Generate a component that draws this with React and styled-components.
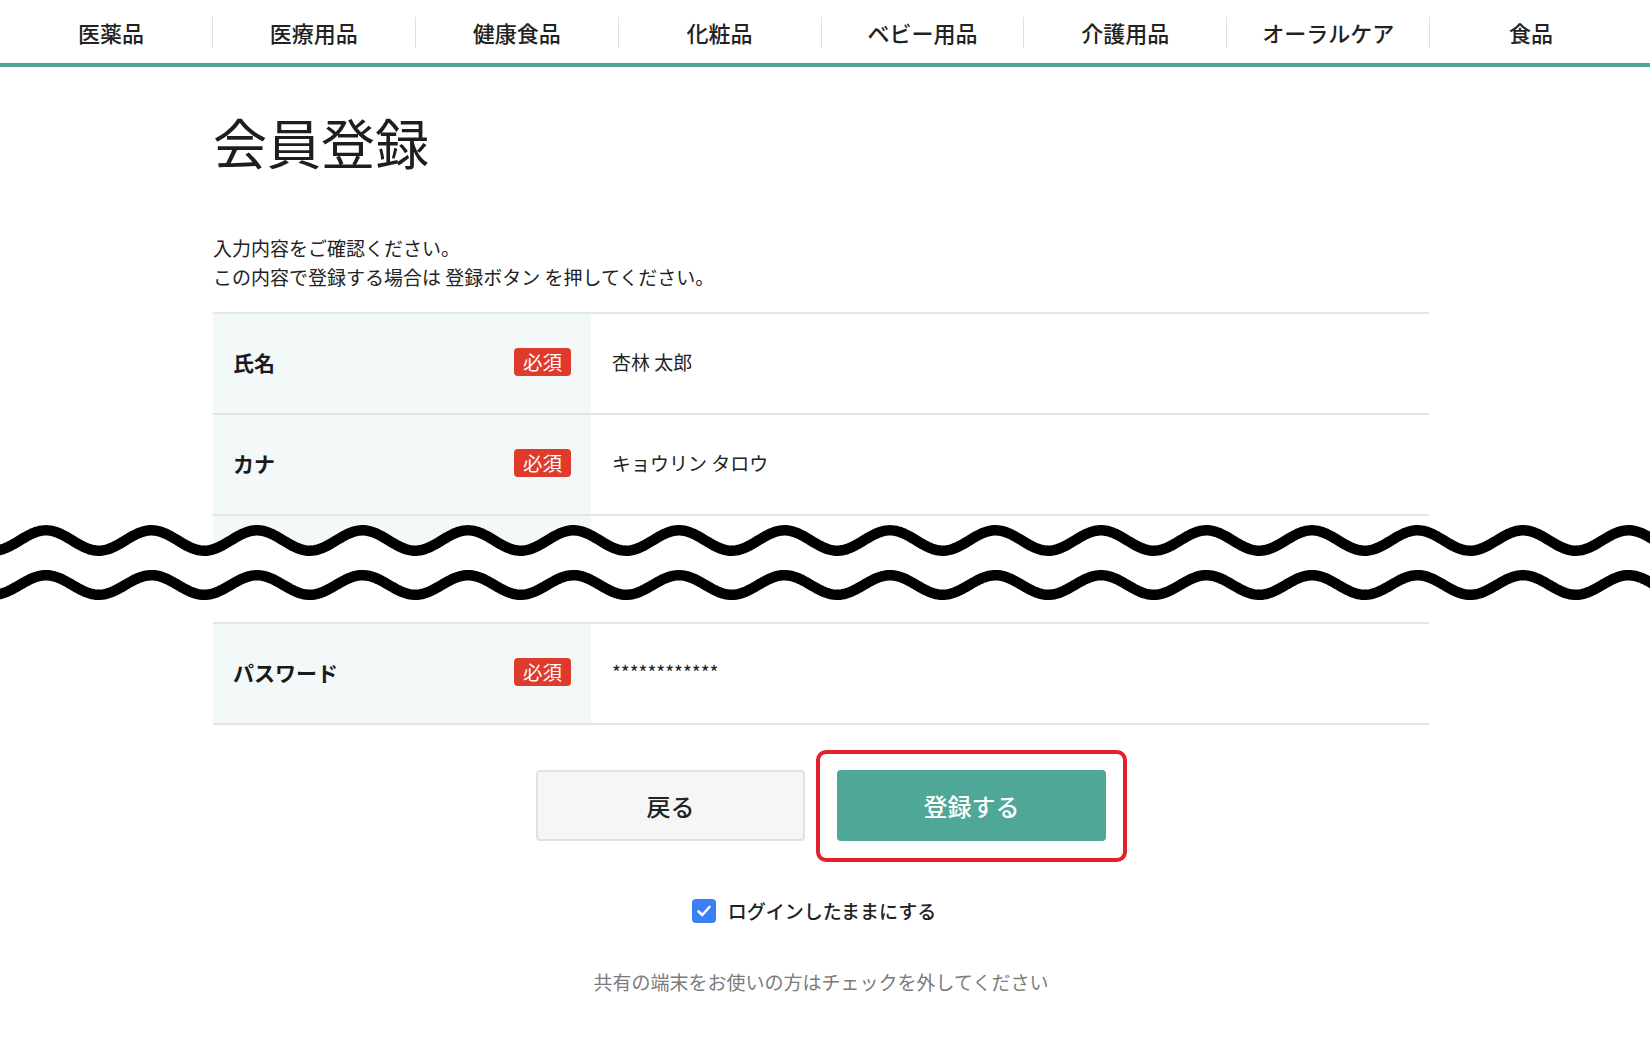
import React from 'react';
import styled, { createGlobalStyle } from 'styled-components';

const FONT = `"Noto Sans CJK JP", "Noto Sans", sans-serif`;

const GlobalStyle = createGlobalStyle`
  html, body { margin: 0; padding: 0; background: #fff; }
  body { font-family: ${FONT}; color: #222; }
  * { box-sizing: border-box; }
`;

const Page = styled.div`
  width: 100%;
  min-height: 1050px;
  background: #fff;
  overflow: hidden;
`;

const Nav = styled.nav`
  height: 67px;
  padding-top: 17px;
  border-bottom: 4px solid #4ea596;
`;

const NavList = styled.ul`
  list-style: none;
  margin: 0 0 0 calc(50% - 815px);
  padding: 0;
  width: 1622px;
  display: flex;
`;

const NavItem = styled.li`
  flex: 1;
  height: 31px;
  padding-bottom: 2px;
  display: flex;
  align-items: center;
  justify-content: center;
  font-size: 22px;
  font-weight: 500;
  line-height: 1;
  color: #222;
  border-left: ${(p) => (p.$first ? 'none' : '1px solid #e0e0e0')};
`;

const Container = styled.div`
  width: 1216px;
  margin-left: calc(50% - 612px);
`;

const Title = styled.h1`
  margin: 42px 0 0;
  font-size: 54px;
  line-height: 66px;
  font-weight: 400;
  color: #1e1e1e;
`;

const Lead = styled.p`
  margin: 59px 0 0;
  font-size: 19px;
  line-height: 28.5px;
  color: #222;
`;

const Table = styled.div`
  margin-top: ${(p) => p.$mt || 0}px;
  border-top: 2px solid #e2e6e6;
`;

const Row = styled.div`
  display: flex;
  height: 101px;
  border-bottom: 2px solid #e2e6e6;
`;

const LabelCell = styled.div`
  width: 378px;
  flex: none;
  background: #f3f8f8;
  display: flex;
  align-items: center;
  justify-content: space-between;
  padding: 0 20px 4px;
`;

const LabelText = styled.span`
  font-size: 21px;
  font-weight: 700;
  color: #1a1a1a;
`;

const Badge = styled.span`
  width: 57px;
  height: 28px;
  border-radius: 4px;
  background: #df3a2c;
  color: #fff;
  font-size: 19.5px;
  line-height: 1;
  display: flex;
  align-items: center;
  justify-content: center;
`;

const ValueCell = styled.div`
  flex: 1;
  display: flex;
  align-items: center;
  padding: 0 0 4px 21px;
  font-size: 19px;
  color: #222;
`;

const Band = styled.div`
  position: relative;
  height: 106px;
`;

const PartialRow = styled.div`
  height: 106px;
  width: 378px;
  background: #f3f8f8;
`;

const WaveSvg = styled.svg`
  position: absolute;
  left: 0;
  top: 0;
  width: 100%;
  height: 106px;
  display: block;
`;

const Actions = styled.div`
  margin-top: 45px;
  display: flex;
  justify-content: center;
  gap: 32px;
`;

const Button = styled.button`
  width: 269px;
  height: 71px;
  border-radius: 4px;
  font-family: ${FONT};
  font-size: 24px;
  font-weight: 500;
  cursor: pointer;
  display: flex;
  align-items: center;
  justify-content: center;
  border: ${(p) => (p.$primary ? 'none' : '2px solid #e1e1e1')};
  background: ${(p) => (p.$primary ? '#4fa797' : '#f6f6f6')};
  color: ${(p) => (p.$primary ? '#fff' : '#222')};
`;

const Highlight = styled.div`
  position: relative;
`;

const HighlightFrame = styled.div`
  position: absolute;
  top: -20px;
  bottom: -21px;
  left: -21px;
  right: -21px;
  border: 4px solid #e3202b;
  border-radius: 10px;
  pointer-events: none;
`;

const KeepRow = styled.label`
  margin-top: 56px;
  height: 28px;
  display: flex;
  align-items: center;
  justify-content: center;
  gap: 12px;
  padding-right: 14px;
`;

const CheckBox = styled.span`
  width: 24px;
  height: 24px;
  border-radius: 4px;
  background: #3a7ff4;
  display: flex;
  align-items: center;
  justify-content: center;
`;

const KeepText = styled.span`
  font-size: 19px;
  font-weight: 500;
  line-height: 28px;
  color: #222;
`;

const Note = styled.p`
  margin: 43px 0 0;
  text-align: center;
  font-size: 19px;
  line-height: 28.5px;
  color: #7b7b7b;
`;

function wave(mid, amp, period, phase, x0, x1) {
  let d = '';
  for (let x = x0; x <= x1; x += 2) {
    const y = mid - amp * Math.cos((2 * Math.PI * (x - phase)) / period);
    d += `${x === x0 ? 'M' : 'L'}${x.toFixed(1)} ${y.toFixed(2)} `;
  }
  return d;
}

const NAV = ['医薬品', '医療用品', '健康食品', '化粧品', 'ベビー用品', '介護用品', 'オーラルケア', '食品'];

function Field({ label, value }) {
  return (
    <Row>
      <LabelCell>
        <LabelText>{label}</LabelText>
        <Badge>必須</Badge>
      </LabelCell>
      <ValueCell>{value}</ValueCell>
    </Row>
  );
}

export default function App() {
  const w1 = wave(24.5, 10.2, 105.5, 46, -60, 1720);
  const w2 = wave(69, 9.8, 105.5, 46, -60, 1720);
  return (
    <Page>
      <GlobalStyle />
      <Nav>
        <NavList>
          {NAV.map((n, i) => (
            <NavItem key={n} $first={i === 0}>{n}</NavItem>
          ))}
        </NavList>
      </Nav>
      <Container>
        <Title>会員登録</Title>
        <Lead>
          入力内容をご確認ください。
          <br />
          この内容で登録する場合は 登録ボタン を押してください。
        </Lead>
        <Table $mt={21}>
          <Field label="氏名" value="杏林 太郎" />
          <Field label="カナ" value="キョウリン タロウ" />
        </Table>
      </Container>
      <Band>
        <Container>
          <PartialRow />
        </Container>
        <WaveSvg viewBox="0 0 1650 106" preserveAspectRatio="xMinYMin slice">
          <path d={`${w1} L1720 106 L-60 106 Z`} fill="#fff" />
          <path d={w1} fill="none" stroke="#000" strokeWidth="10.5" />
          <path d={w2} fill="none" stroke="#000" strokeWidth="10.5" />
        </WaveSvg>
      </Band>
      <Container>
        <Table>
          <Field label="パスワード" value="************" />
        </Table>
        <Actions>
          <Button type="button">戻る</Button>
          <Highlight>
            <Button type="button" $primary>登録する</Button>
            <HighlightFrame />
          </Highlight>
        </Actions>
        <KeepRow>
          <CheckBox>
            <svg width="18" height="18" viewBox="0 0 18 18">
              <polyline points="3.5,9.5 7.3,13 14.5,5" fill="none" stroke="#fff" strokeWidth="2.6" strokeLinecap="round" strokeLinejoin="round" />
            </svg>
          </CheckBox>
          <KeepText>ログインしたままにする</KeepText>
        </KeepRow>
        <Note>共有の端末をお使いの方はチェックを外してください</Note>
      </Container>
    </Page>
  );
}
